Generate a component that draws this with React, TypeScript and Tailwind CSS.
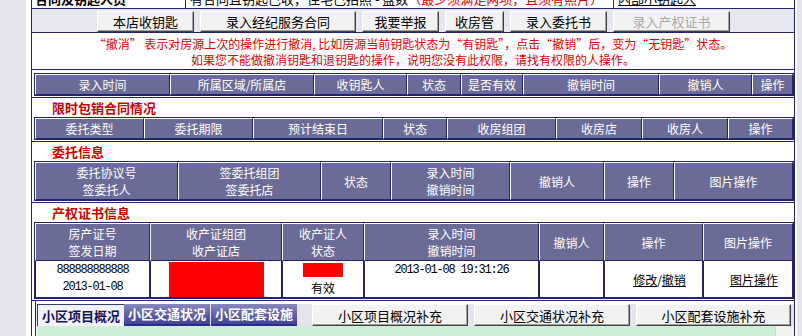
import React from 'react';

// cell styles (old-school inset table look)
const hd =
  'flex items-center justify-center text-center text-white bg-[#6b6b97] border-t border-l border-t-white border-l-white border-r border-b border-r-[#23236e] border-b-[#23236e] leading-[17px]';
const td =
  'flex items-center justify-center text-center text-black bg-white border-l border-r border-b border-[#23236e] leading-[17px]';
const btn =
  'flex items-center justify-center bg-[#f2f2f2] border border-t-white border-l-white border-r-[#404040] border-b-[#404040] shadow-[inset_-1px_-1px_#a0a0a0] text-[13px] leading-none';
const title = 'h-[19px] pl-[20px] text-[13px] font-bold text-[#cc0000] leading-[19px]';
const mono = "font-['Liberation_Mono',monospace] text-[12px] tracking-[-1.2px]";

const HeadRow = ({ cols, labels, h }: { cols: string; labels: React.ReactNode[]; h: string }) => (
  <div className={`grid ${cols}`}>
    {labels.map((l, i) => (
      <div key={i} className={`${hd} ${h}`}>
        {l}
      </div>
    ))}
  </div>
);

export default function App() {
  const t1 = ['录入时间', '所属区域/所属店', '收钥匙人', '状态', '是否有效', '撤销时间', '撤销人', '操作'];
  const t2 = ['委托类型', '委托期限', '预计结束日', '状态', '收房组团', '收房店', '收房人', '操作'];
  const t3 = [
    <>委托协议号<br />签委托人</>,
    <>签委托组团<br />签委托店</>,
    '状态',
    <>录入时间<br />撤销时间</>,
    '撤销人',
    '操作',
    '图片操作',
  ];
  const t4 = [
    <>房产证号<br />签发日期</>,
    <>收产证组团<br />收产证店</>,
    <>收产证人<br />状态</>,
    <>录入时间<br />撤销时间</>,
    '撤销人',
    '操作',
    '图片操作',
  ];

  return (
    <div className="h-[336px] overflow-hidden bg-[#e4e4ec] pl-[26px] pr-[5px] font-['Noto_Sans_CJK_SC',sans-serif] text-[12px]">
      <div className="h-full bg-white pl-[5px] pr-[2px]">
        <div className="h-full border-x border-[#23236e]">
          {/* top row, mostly scrolled out of view */}
          <div className="h-[9px] overflow-hidden border-b border-[#23236e]">
            <div className="-mt-[12px] flex h-[22px]">
              <div className="flex w-[154px] items-center border-r border-[#23236e] pl-[3px] text-[13px] font-bold">
                合同及钥匙人员
              </div>
              <div className="flex w-[428px] items-center border-r border-[#23236e] pl-[4px] text-[13px]">
                有合同且钥匙已收，住宅已拍照 - 盘数
                <span className="text-[#e00000]">（最少须满足两项，且须有照片）</span>
              </div>
              <div className="flex items-center pl-[4px] text-[13px] underline">内部小钥匙人</div>
            </div>
          </div>

          {/* buttons */}
          <div className="flex h-[24px] gap-[6px] border-b border-[#23236e] bg-[#e6e6ee] pl-[65px] pt-[2px]">
            <div className={`${btn} h-[21px] w-[97px]`}>本店收钥匙</div>
            <div className={`${btn} h-[21px] w-[156px]`}>录入经纪服务合同</div>
            <div className={`${btn} h-[21px] w-[77px]`}>我要举报</div>
            <div className={`${btn} h-[21px] w-[59px]`}>收房管</div>
            <div className={`${btn} h-[21px] w-[97px]`}>录入委托书</div>
            <div className={`${btn} h-[21px] w-[117px] text-[#a8a8a8]`}>录入产权证书</div>
          </div>

          {/* notice */}
          <div className="h-[37px] border-b border-[#23236e] pt-[3px] text-center leading-[16px] text-[#e00000]">
            <div>“撤消” 表示对房源上次的操作进行撤消, 比如房源当前钥匙状态为“有钥匙”，点击“撤销”后，变为“无钥匙”状态。</div>
            <div>如果您不能做撤消钥匙和退钥匙的操作，说明您没有此权限，请找有权限的人操作。</div>
          </div>

          {/* keys table */}
          <div className="border-b border-[#23236e] pb-[1px] pl-[2px] pt-[3px]">
            <div className="w-[760px] border border-[#23236e]">
              <HeadRow cols="grid-cols-[135px_144px_93px_54px_62px_136px_93px_41px]" labels={t1} h="h-[21px]" />
            </div>
          </div>

          {/* 限时包销 */}
          <div className="border-b border-[#23236e] pb-[1px] pl-[2px]">
            <div className={`${title} -ml-[2px]`}>限时包销合同情况</div>
            <div className="w-[760px] border border-[#23236e]">
              <HeadRow cols="grid-cols-[109px_109px_130px_64px_109px_86px_86px_65px]" labels={t2} h="h-[21px]" />
            </div>
          </div>

          {/* 委托信息 */}
          <div className="border-b border-[#23236e] pb-[1px] pl-[2px]">
            <div className={`${title} -ml-[2px]`}>委托信息</div>
            <div className="w-[760px] border border-[#23236e]">
              <HeadRow cols="grid-cols-[143px_143px_70px_119px_94px_70px_119px]" labels={t3} h="h-[38px]" />
            </div>
          </div>

          {/* 产权证书信息 */}
          <div className="border-b border-[#23236e] pb-[1px] pl-[2px]">
            <div className={`${title} -ml-[2px]`}>产权证书信息</div>
            <div className="w-[760px] border border-[#23236e]">
              <HeadRow cols="grid-cols-[115px_132px_82px_175px_65px_99px_90px]" labels={t4} h="h-[38px]" />
              <div className="grid grid-cols-[115px_132px_82px_175px_65px_99px_90px]">
                <div className={`${td} h-[37px] flex-col ${mono}`}>
                  <span>888888888888</span>
                  <span>2013-01-08</span>
                </div>
                <div className={`${td} h-[37px]`}>
                  <div className="h-[35px] w-[95px] bg-[#ff0000]" />
                </div>
                <div className={`${td} h-[37px] flex-col`}>
                  <div className="mb-[2px] mt-[1px] h-[14px] w-[40px] bg-[#ff0000]" />
                  <span>有效</span>
                </div>
                <div className={`${td} h-[37px] flex-col justify-start pt-[1px] ${mono}`}>
                  <span>2013-01-08 19:31:26</span>
                </div>
                <div className={`${td} h-[37px]`} />
                <div className={`${td} h-[37px] pl-[12px]`}>
                  <span className="underline">修改</span>/<span className="underline">撤销</span>
                </div>
                <div className={`${td} h-[37px] pl-[12px]`}>
                  <span className="underline">图片操作</span>
                </div>
              </div>
            </div>
          </div>

          {/* 小区 tabs */}
          <div className="pl-[3px]">
            <div className="border-l border-[#23236e] pt-[3px]">
              <div className="flex h-[22px] bg-[#e4e4ec] pl-[1px]">
                <div className="flex w-[87px] items-center justify-center border-l border-t border-[#3a3a80] bg-[#f2f2fa] text-[13px] font-bold text-[#14145a]">
                  小区项目概况
                </div>
                <div className="flex w-[86px] items-center justify-center border-b-2 border-[#2c2c8c] bg-[linear-gradient(180deg,#8888c0,#5c5ca2_60%,#44449a)] text-[13px] font-bold text-white">
                  小区交通状况
                </div>
                <div className="ml-[1px] flex w-[86px] items-center justify-center border-b-2 border-[#2c2c8c] bg-[linear-gradient(180deg,#8888c0,#5c5ca2_60%,#44449a)] text-[13px] font-bold text-white">
                  小区配套设施
                </div>
                <div className={`${btn} ml-[15px] h-[22px] w-[156px]`}>小区项目概况补充</div>
                <div className={`${btn} ml-[6px] h-[22px] w-[156px]`}>小区交通状况补充</div>
                <div className={`${btn} ml-[6px] h-[22px] w-[155px]`}>小区配套设施补充</div>
              </div>
              <div className="flex h-[40px] pl-[1px]">
                <div className="w-[738px] bg-[#ccefd6]" />
                <div className="flex-1 border-l border-[#d4d4d4] bg-[#f2f2f2]" />
              </div>
            </div>
          </div>
        </div>
      </div>
    </div>
  );
}
